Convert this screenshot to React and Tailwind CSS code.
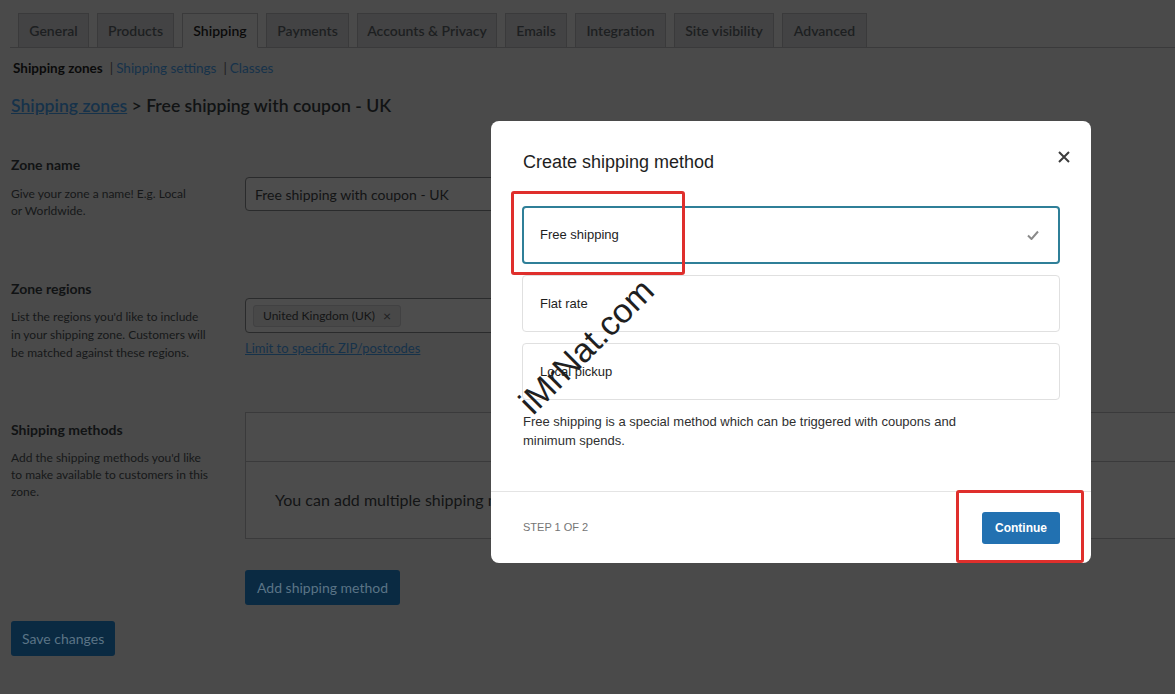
import React from 'react';

// Background page is shown dimmed behind the modal, so its colours are the dimmed ones.
const tabs = [
  { label: 'General', w: 'w-[71px]' },
  { label: 'Products', w: 'w-[77px]' },
  { label: 'Shipping', w: 'w-[76px]', active: true },
  { label: 'Payments', w: 'w-[83px]' },
  { label: 'Accounts & Privacy', w: 'w-[140px]' },
  { label: 'Emails', w: 'w-[62px]' },
  { label: 'Integration', w: 'w-[91px]' },
  { label: 'Site visibility', w: 'w-[100px]' },
  { label: 'Advanced', w: 'w-[85px]' },
];

const methods = [
  { id: 'free', label: 'Free shipping', selected: true },
  { id: 'flat', label: 'Flat rate' },
  { id: 'local', label: 'Local pickup' },
];

const SettingsPage = () => (
  <div className="font-['Lato',sans-serif] text-[#111314]">
    {/* Tabs */}
    <div className="pl-[10px] pt-[13px]">
      <nav className="flex gap-[8px] border-b border-[#3a3a3b] pl-[8px]">
        {tabs.map(tab => (
          <div
            key={tab.label}
            className={`${tab.w} h-[35px] -mb-px flex items-center justify-center border border-[#3a3a3b] text-[14px] font-semibold ${
              tab.active ? 'bg-[#4a4a4a] text-[#0a0a0a] border-b-[#4a4a4a]' : 'bg-[#434344] text-[#1d1f21]'
            }`}
          >
            {tab.label}
          </div>
        ))}
      </nav>
    </div>

    {/* Sub navigation */}
    <div className="mt-[11px] pl-[13px] flex items-center text-[13.5px] h-[18px]">
      <span className="font-bold text-[#0a0a0a]">Shipping zones</span>
      <span className="ml-[7px] text-[#1e1f21]">|</span>
      <span className="ml-[3px] text-[#16324a]">Shipping settings</span>
      <span className="ml-[7px] text-[#1e1f21]">|</span>
      <span className="ml-[3px] text-[#16324a]">Classes</span>
    </div>

    {/* Heading */}
    <h2 className="mt-[16px] pl-[11px] text-[17.6px] font-semibold leading-[26px]">
      <span className="text-[#16324a] underline">Shipping zones</span> &gt; Free shipping with coupon - UK
    </h2>

    <div className="pl-[11px] mt-[36px]">
      {/* Zone name */}
      <div className="flex h-[124px]">
        <div className="w-[234px] shrink-0">
          <div className="text-[14px] font-bold leading-[20px]">Zone name</div>
          <p className="mt-[10px] w-[185px] text-[12px] leading-[17px] text-[#161819]">
            Give your zone a name! E.g. Local or Worldwide.
          </p>
        </div>
        <div className="pt-[22px]">
          <div className="w-[420px] h-[34px] border border-[#2a2b2c] rounded-[4px] bg-[#4d4d4d] flex items-center px-[9px] text-[14px] text-[#131415]">
            Free shipping with coupon - UK
          </div>
        </div>
      </div>

      {/* Zone regions */}
      <div className="flex h-[133px]">
        <div className="w-[234px] shrink-0">
          <div className="text-[14px] font-bold leading-[20px]">Zone regions</div>
          <p className="mt-[9px] w-[198px] text-[12px] leading-[18px] text-[#161819]">
            List the regions you'd like to include in your shipping zone. Customers will be matched against these regions.
          </p>
        </div>
        <div className="pt-[19px]">
          <div className="w-[420px] h-[35px] border border-[#2a2b2c] rounded-[4px] bg-[#4d4d4d] flex items-center px-[7px]">
            <span className="h-[22px] flex items-center gap-[8px] rounded-[3px] bg-[#484848] border border-[#414142] px-[9px] text-[12px] text-[#131415]">
              United Kingdom (UK)
              <span className="text-[14px] text-[#1e1f21]">×</span>
            </span>
          </div>
          <div className="mt-[6px] text-[13px] text-[#16324a] underline">Limit to specific ZIP/postcodes</div>
        </div>
      </div>

      {/* Shipping methods */}
      <div className="flex">
        <div className="w-[234px] shrink-0 pt-[8px]">
          <div className="text-[14px] font-bold leading-[20px]">Shipping methods</div>
          <p className="mt-[9px] w-[200px] text-[12px] leading-[17px] text-[#161819]">
            Add the shipping methods you'd like to make available to customers in this zone.
          </p>
        </div>
        <div>
          <div className="w-[960px] border border-[#3a3a3b] bg-[#4c4c4c]">
            <div className="h-[49px] border-b border-[#3a3a3b]" />
            <div className="h-[76px] flex items-center pl-[29px] text-[16px] text-[#131415]">
              You can add multiple shipping methods within this zone. Only customers within the zone will see them.
            </div>
          </div>
          <button className="mt-[31px] h-[35px] px-[12px] rounded-[3px] bg-[#0a2a42] text-[#5b7486] text-[14px]">
            Add shipping method
          </button>
        </div>
      </div>

      <button className="mt-[16px] h-[35px] px-[11px] rounded-[3px] bg-[#0a2a42] text-[#5b7486] text-[14px]">
        Save changes
      </button>
    </div>
  </div>
);

const CreateMethodModal = () => (
  <div className="absolute left-[491px] top-[121px] w-[600px] h-[442px] bg-white rounded-[8px] font-['Liberation_Sans',Arial,sans-serif] flex flex-col">
    <div className="flex-1 pl-[32px] pr-[31px] pt-[29px]">
      <div className="flex items-start justify-between">
        <h3 className="text-[18px] leading-[24px] text-[#1e1e1e]">Create shipping method</h3>
        <svg className="mt-[1px] mr-[-10px]" width="12" height="12" viewBox="0 0 12 12" fill="none" stroke="#3c3c3c" strokeWidth="2">
          <path d="M1 1l10 10M11 1L1 11" />
        </svg>
      </div>

      <div className="mt-[32px] -ml-[1px] flex flex-col gap-[11px] w-[538px]">
        {methods.map(m => (
          <div
            key={m.id}
            className={`flex items-center justify-between rounded-[4px] bg-white pl-[16px] pr-[19px] text-[13px] text-[#1e1e1e] ${
              m.selected ? 'h-[58px] border-2 border-[#2f7f98]' : 'h-[57px] border border-[#e0e0e0] pl-[17px]'
            }`}
          >
            <span>{m.label}</span>
            {m.selected && (
              <svg width="12" height="10" viewBox="0 0 12 10" fill="none" stroke="#8a8a8a" strokeWidth="2">
                <path d="M1 5.5l3.5 3.5L11 1.5" />
              </svg>
            )}
          </div>
        ))}
      </div>

      <p className="mt-[12px] w-[450px] text-[13px] leading-[19px] text-[#2f2f2f]">
        Free shipping is a special method which can be triggered with coupons and minimum spends.
      </p>
    </div>

    <div className="h-[72px] border-t border-[#e4e4e4] flex items-center justify-between pl-[32px] pr-[31px]">
      <span className="text-[11px] uppercase text-[#757575]">Step 1 of 2</span>
      <button className="w-[78px] h-[32px] rounded-[3px] bg-[#2271b1] text-white text-[12px] font-bold">
        Continue
      </button>
    </div>
  </div>
);

const App = () => {
  return (
    <div className="relative w-full h-[694px] overflow-hidden bg-[#4a4a4a]">
      <SettingsPage />

      <CreateMethodModal />

      {/* Annotations */}
      <div className="absolute left-[511px] top-[191px] w-[174px] h-[84px] border-[3px] border-[#df2f2c] rounded-[3px]" />
      <div className="absolute left-[956px] top-[490px] w-[128px] h-[73px] border-[3px] border-[#df2f2c] rounded-[3px]" />

      {/* Watermark */}
      <div className="absolute left-[586px] top-[346px] -translate-x-1/2 -translate-y-1/2 -rotate-45 font-['Liberation_Sans',Arial,sans-serif] text-[34px] leading-none text-[#1f1f1f] whitespace-nowrap">
        iMrNat.com
      </div>
    </div>
  );
};

export default App;
